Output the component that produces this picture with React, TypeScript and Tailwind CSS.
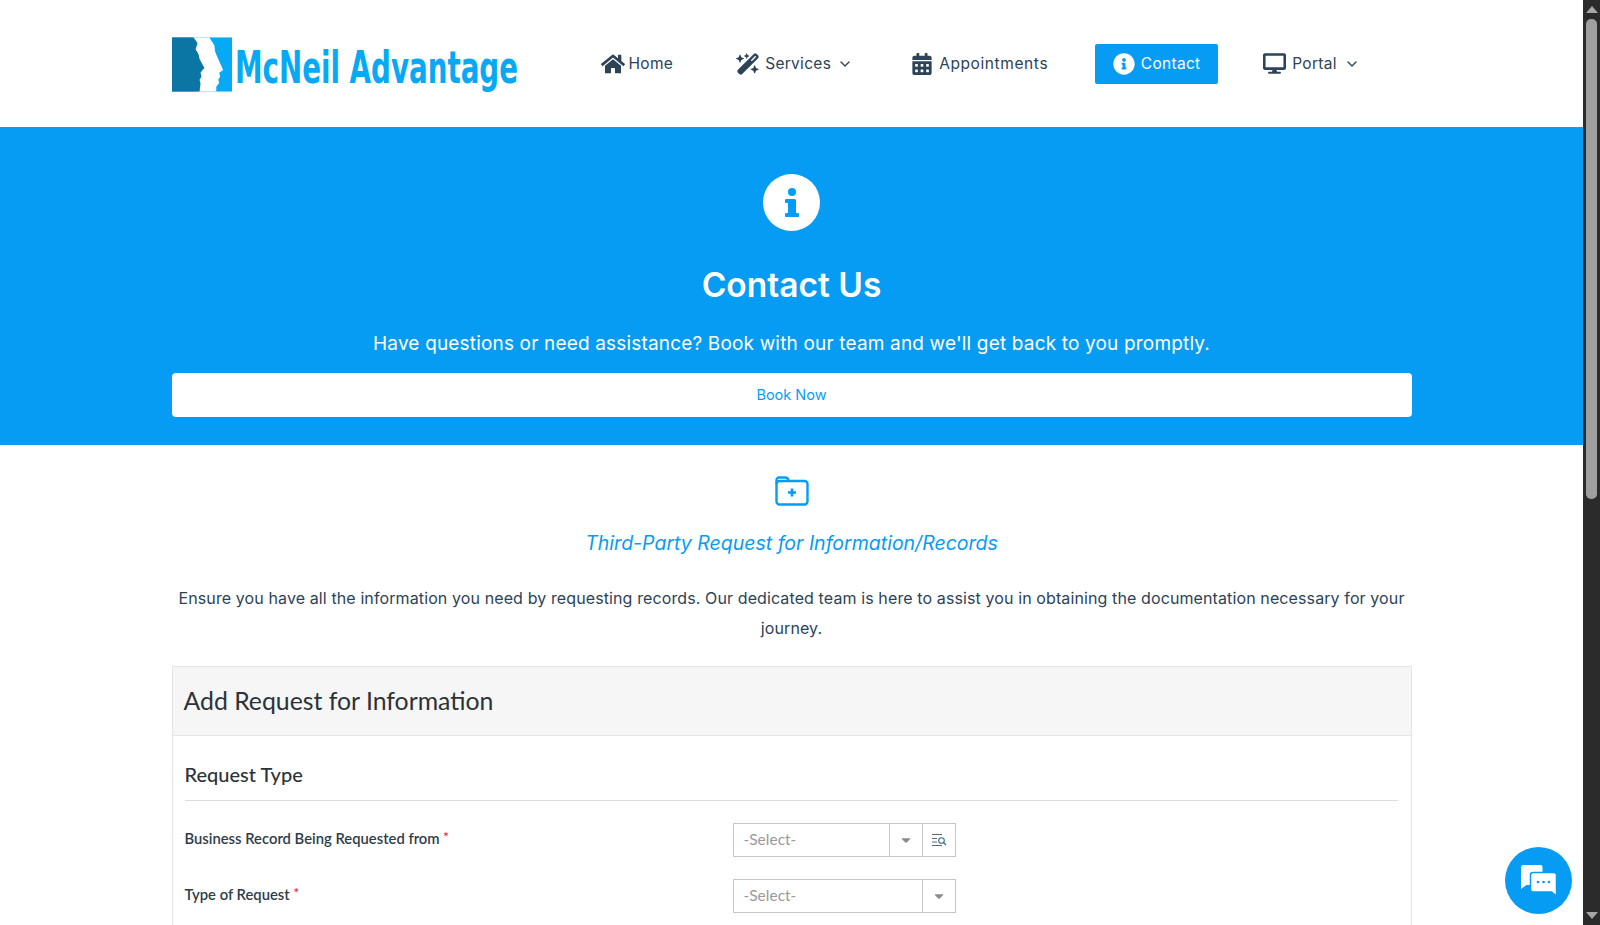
import React from 'react';
import { FaHome, FaCalendarAlt, FaInfoCircle, FaDesktop, FaCaretDown } from 'react-icons/fa';
import { FaWandMagicSparkles } from 'react-icons/fa6';
import { ChevronDown } from 'lucide-react';

const navText = "text-[15.5px] tracking-[0.3px] leading-none";

const LogoMark = () => (
  <svg width="60" height="55" viewBox="0 0 61 55" className="shrink-0">
    <rect width="61" height="55" fill="#06a9f4" />
    <path d="M20 0 H38 L43 8 L44 15 L47 22 L52 33 L48 36 L49 40 L47 43 L48 46 L45 50 L45 55 H24 Z" fill="#ffffff" />
    <path d="M0 0 H22 L26 6 L24 12 L27 17 L28 22 L33 31 L31 33 L29 36 L30 40 L28 43 L29 47 L28 55 H0 Z" fill="#0b76a4" />
  </svg>
);

const FolderPlusIcon = () => (
  <svg width="34" height="30" viewBox="0 0 34 30" fill="none" stroke="#069cf4" strokeWidth="2.4" strokeLinejoin="round">
    <path d="M1.5 8V4a2.5 2.5 0 0 1 2.5-2.5h6.5c1.5 0 2.3 1 3 2.5" />
    <rect x="1.5" y="5" width="31" height="23.5" rx="3" />
    <path d="M17 12.5v8M13 16.5h8" strokeWidth="2.6" />
  </svg>
);

const ChatIcon = () => (
  <svg width="36" height="32" viewBox="0 0 36 32">
    <path d="M2.5 0h17a2 2 0 0 1 2 2v16a2 2 0 0 1-2 2H5.500L0 24V2.500A2.500 2.500 0 0 1 2.500 0Z" fill="#ffffff" />
    <path d="M12 7.500h21a2.500 2.500 0 0 1 2.500 2.500v21l-5-4H12a2.500 2.500 0 0 1-2.500-2.500V10A2.500 2.500 0 0 1 12 7.500Z" fill="#ffffff" stroke="#069cf4" strokeWidth="1.500" />
    <circle cx="17" cy="17" r="1.300" fill="#069cf4" />
    <circle cx="22.500" cy="17" r="1.300" fill="#069cf4" />
    <circle cx="28" cy="17" r="1.300" fill="#069cf4" />
  </svg>
);

const LookupIcon = () => (
  <svg width="16" height="14" viewBox="0 0 16 14" fill="none" stroke="#5d6770" strokeWidth="1.100">
    <path d="M1 1.500h10M1 5.500h5M1 9h5M1 12.500h10" />
    <circle cx="10.500" cy="7.500" r="2.800" stroke="#2b6f8f" />
    <path d="M12.500 9.500l2.500 2.500" stroke="#2b6f8f" />
  </svg>
);

const SelectBox = ({ lookup }: { lookup?: boolean }) => (
  <div className="flex h-[34px] w-[223px] border border-[#c9c7c5] bg-white font-['Lato',sans-serif] text-[15.500px] text-[#9a9a9a]">
    <div className="flex-1 flex items-center px-[10px]">-Select-</div>
    <div className="w-[33px] flex items-center justify-center border-l border-[#c9c7c5] text-[#8a8a8a]">
      <FaCaretDown size={14} />
    </div>
    {lookup && (
      <div className="w-[33px] flex items-center justify-center border-l border-[#c9c7c5]">
        <LookupIcon />
      </div>
    )}
  </div>
);

const FormRow = ({ label, lookup }: { label: string; lookup?: boolean }) => (
  <div className="flex h-[56px]">
    <label className="w-[548px] pt-[4px] text-[14.800px] font-semibold text-[#2f3d4a] leading-[20px]">
      {label} <span className="text-[#e02b2b] align-[2px] text-[13px]">*</span>
    </label>
    <SelectBox lookup={lookup} />
  </div>
);

export default function App() {
  return (
    <div className="flex h-screen overflow-hidden bg-white font-['Inter',sans-serif]">
      <main className="flex-1 min-w-0 overflow-hidden">
        <header className="h-[127px] flex items-center">
          <div className="w-[1240px] mx-auto flex items-center text-[#2c4358]">
            <div className="flex items-center w-[429px] pt-[2px]">
              <LogoMark />
              <span className="ml-[3px] pt-[6px] w-[285px] text-[44px] leading-none font-bold text-[#06a9f4] font-['DejaVu_Sans_Condensed','DejaVu_Sans',sans-serif] origin-left scale-x-[0.7] whitespace-nowrap">McNeil Advantage</span>
            </div>
            <nav className="flex items-center">
              <a className="flex items-center gap-[4px]"><FaHome size={24} /><span className={navText}>Home</span></a>
              <a className="flex items-center gap-[5px] ml-[63px]"><FaWandMagicSparkles size={24} /><span className={navText}>Services</span><ChevronDown size={16} strokeWidth={2} className="ml-[1px]" /></a>
              <a className="flex items-center gap-[6px] ml-[58px]"><FaCalendarAlt size={22} /><span className="text-[15.5px] tracking-[0.6px] leading-none">Appointments</span></a>
              <a className="flex items-center gap-[6px] ml-[47px] h-[40px] w-[123px] justify-center rounded-[2px] bg-[#069cf4] text-white"><FaInfoCircle size={22} /><span className={navText}>Contact</span></a>
              <a className="flex items-center gap-[6px] ml-[45px]"><FaDesktop size={23} /><span className={navText}>Portal</span><ChevronDown size={16} strokeWidth={2} className="ml-[1px]" /></a>
            </nav>
          </div>
        </header>

        <section className="h-[318px] bg-[#069cf4] pt-[47px] text-white">
          <div className="w-[1240px] mx-auto flex flex-col items-center">
            <div className="w-[57px] h-[57px] rounded-full bg-white flex items-center justify-center">
              <svg width="14" height="30" viewBox="0 0 14 30" fill="#069cf4">
                <circle cx="7" cy="4" r="4" />
                <path d="M1.500 11h8a1.500 1.500 0 0 1 1.500 1.500V25h1.500a1.500 1.500 0 0 1 0 4h-11a1.500 1.500 0 0 1 0-4H3v-10H1.500a2 2 0 0 1 0-4Z" />
              </svg>
            </div>
            <h1 className="mt-[29px] text-[33.500px] leading-[50px] font-semibold">Contact Us</h1>
            <p className="mt-[19px] text-[19px] leading-[30px] tracking-[0.17px]">Have questions or need assistance? Book with our team and we'll get back to you promptly.</p>
            <button className="mt-[14px] w-full h-[44px] rounded-[4px] bg-white text-[#069cf4] text-[14.500px]">Book Now</button>
          </div>
        </section>

        <section className="w-[1240px] mx-auto">
          <div className="flex flex-col items-center pt-[31px]">
            <FolderPlusIcon />
            <h2 className="mt-[22px] text-[19.500px] leading-[30px] italic text-[#069cf4]">Third-Party Request for Information/Records</h2>
            <p className="mt-[25px] text-center text-[16px] leading-[30px] text-[#2c4358] tracking-[0.11px]">Ensure you have all the information you need by requesting records. Our dedicated team is here to assist you in obtaining the documentation necessary for your journey.</p>
          </div>

          <div className="mt-[23px] border border-[#e4e4e4] font-['Lato',sans-serif]">
            <div className="h-[69px] flex items-center px-[11px] bg-[#f6f6f6] border-b border-[#e4e4e4] text-[24.800px] text-[#2c3338]">Add Request for Information</div>
            <div className="pl-[12px] pr-[13px]">
              <h3 className="pt-[24px] pb-[12px] text-[20px] leading-[28px] font-medium text-[#2c3338] border-b border-[#dcdcdc]">Request Type</h3>
              <div className="pt-[22px]">
                <FormRow label="Business Record Being Requested from" lookup />
                <FormRow label="Type of Request" />
              </div>
            </div>
          </div>
        </section>
      </main>

      <aside className="w-[17px] shrink-0 bg-[#2b2b2b] flex flex-col items-center">
        <div className="mt-[6px] w-0 h-0 border-x-[6px] border-x-transparent border-b-[7px] border-b-[#a6a6a6]" />
        <div className="mt-[6px] w-[11px] h-[480px] rounded-[5px] bg-[#9f9f9f]" />
        <div className="mt-auto mb-[6px] w-0 h-0 border-x-[6px] border-x-transparent border-t-[7px] border-t-[#a6a6a6]" />
      </aside>

      <button className="fixed right-[28px] bottom-[11px] w-[67px] h-[67px] rounded-full bg-[#069cf4] flex items-center justify-center">
        <ChatIcon />
      </button>
    </div>
  );
}
